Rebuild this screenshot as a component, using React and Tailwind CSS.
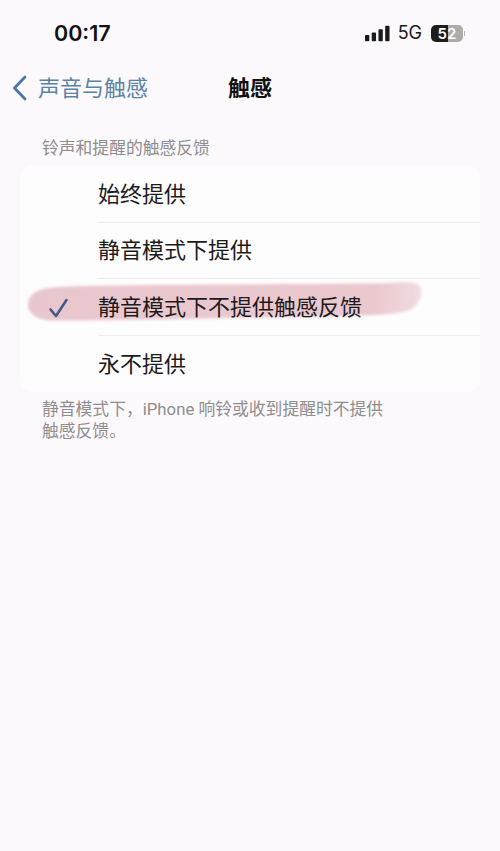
const CJK = "font-['Inter','Noto_Sans_CJK_SC',sans-serif]";

function Row({ label, checked, last }) {
  return (
    <div className="flex h-[56.5px] items-stretch">
      <div className="relative w-[78px] shrink-0">
        {checked && (
          <svg className="absolute left-[28px] top-[18px]" width="22" height="22" viewBox="0 0 22 22" fill="none">
            <path d="M2.5 12.5 L8 19 L18.5 3" stroke="#475a85" strokeWidth="2.6" strokeLinecap="round" strokeLinejoin="round" />
          </svg>
        )}
      </div>
      <div className={`flex flex-1 items-center border-[#eeedee] text-[22px] leading-none text-[#1c1a1b] ${last ? "" : "border-b"}`}>
        <span className="relative">{label}</span>
      </div>
    </div>
  );
}

function Brush() {
  return (
    <svg className="absolute left-[24px] top-[280px] pointer-events-none" width="400" height="44" viewBox="0 0 400 44">
      <defs>
        <filter id="soft" x="-5%" y="-20%" width="110%" height="140%">
          <feGaussianBlur stdDeviation="1.4" />
        </filter>
        <linearGradient id="ink" x1="0" y1="0" x2="1" y2="0">
          <stop offset="0" stopColor="#e8c6cd" />
          <stop offset="0.5" stopColor="#eac8cf" />
          <stop offset="0.88" stopColor="#e9c8ce" />
          <stop offset="1" stopColor="#f1dce0" />
        </linearGradient>
      </defs>
      <path
        filter="url(#soft)"
        fill="url(#ink)"
        d="M4 24 C5 13 15 8 34 7 C80 5 130 5 190 4.5 C250 4 320 4 365 3 C380 2 392 1 396 6 C399 13 396 24 386 30 C372 35 345 35 320 36 C270 37 220 38 180 38.5 C120 40 70 40.5 24 40.5 C10 38 3 32 4 24 Z"
      />
    </svg>
  );
}

export default function App() {
  return (
    <div className={`relative h-[851px] w-[500px] overflow-hidden bg-[#fbf9fc] ${CJK}`}>
      <div className="flex h-[66px] items-center justify-between pl-[54px] pr-[35px]">
        <span className="text-[21.5px] font-semibold leading-[28px] text-[#111]">00:17</span>
        <div className="flex items-center gap-[8px]">
          <svg width="25" height="17" viewBox="0 0 26 17" fill="#1a1a1a">
            <rect x="0" y="10" width="4.5" height="6.5" rx="1" />
            <rect x="7" y="7.5" width="4.5" height="9" rx="1" />
            <rect x="14" y="4" width="4.5" height="12.5" rx="1" />
            <rect x="21" y="0.5" width="4.5" height="16" rx="1" />
          </svg>
          <span className="text-[18px] leading-none text-[#1a1a1a]">5G</span>
          <div className="ml-[1px] flex items-center">
            <div className="flex h-[17px] w-[32px] items-center justify-center rounded-[5px] bg-[linear-gradient(90deg,#1f1c1a_0,#1f1c1a_52%,#aeaca7_52%,#aeaca7_100%)] text-[15px] font-semibold leading-none text-white">
              52
            </div>
            <div className="ml-[1px] h-[5px] w-[1px] bg-[#b9b7b5]" />
          </div>
        </div>
      </div>

      <div className="relative flex h-[44px] items-center justify-center">
        <div className="absolute left-[12px] top-[9px] flex items-center gap-[11px]">
          <svg width="15" height="26" viewBox="0 0 15 26" fill="none">
            <path d="M13 2 L2.5 13 L13 24" stroke="#4a76a8" strokeWidth="2.8" strokeLinecap="round" strokeLinejoin="round" />
          </svg>
          <span className="text-[22px] leading-none text-[#5b82a6]">声音与触感</span>
        </div>
        <span className="text-[22px] font-bold leading-none text-[#111]">触感</span>
      </div>

      <div className="pl-[42px] pt-[27px] text-[16.8px] leading-[22px] text-[#8f8d8e]">铃声和提醒的触感反馈</div>

      <div className="mx-[20px] mt-[6px] rounded-[14px] bg-[#fefdfe] pt-[1px]">
        <Brush />
        <Row label="始终提供" />
        <Row label="静音模式下提供" />
        <Row label="静音模式下不提供触感反馈" checked />
        <Row label="永不提供" last />
      </div>

      <div className="pl-[42px] pr-[110px] pt-[6px] font-['Roboto','Noto_Sans_CJK_SC',sans-serif] text-[16.8px] leading-[22px] text-[#8f8d8e]">
        静音模式下，iPhone 响铃或收到提醒时不提供触感反馈。
      </div>
    </div>
  );
}
